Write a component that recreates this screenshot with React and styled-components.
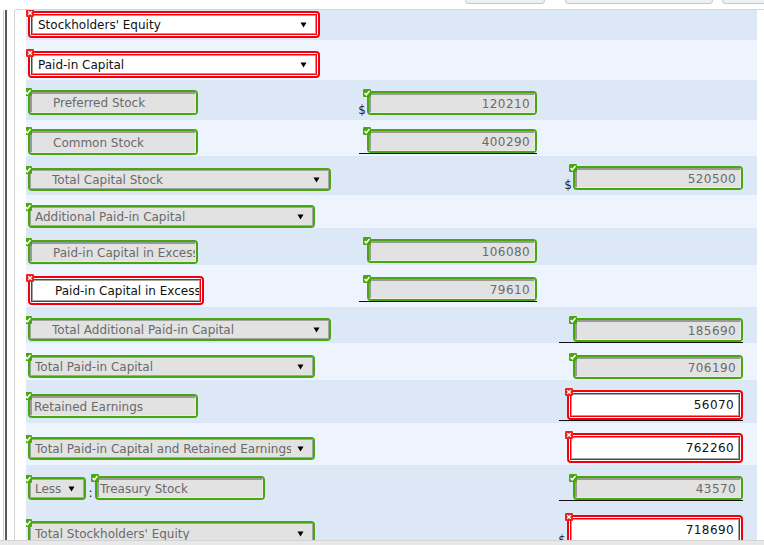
import styled, { createGlobalStyle } from "styled-components";

const GREEN = "#46a80c";
const RED = "#f2000c";

const Global = createGlobalStyle`
  html, body {
    margin: 0;
    padding: 0;
    background: #fff;
  }
  body {
    font-family: "DejaVu Sans", Verdana, sans-serif;
    font-size: 12px;
  }
`;

const Page = styled.div`
  width: 764px;
  height: 545px;
  overflow: hidden;
  display: flex;
  flex-direction: column;
`;

const TopBar = styled.div`
  height: 9px;
  margin-left: 15px;
  padding-left: 450px;
  border-bottom: 1px solid #cfd6de;
  display: flex;
  align-items: flex-start;
  gap: 20px;
  overflow: hidden;
`;

const TopButton = styled.span`
  flex: none;
  box-sizing: border-box;
  width: ${(p) => p.$w}px;
  height: 4px;
  margin-left: ${(p) => p.$ml || 0}px;
  background: #eef0f3;
  border: 1px solid #c4c9cf;
  border-top: none;
  border-radius: 0 0 5px 5px;
`;

const Body = styled.div`
  flex: 1;
  display: flex;
  min-height: 0;
`;

const Rail = styled.div`
  flex: none;
  width: 26px;
  background: linear-gradient(
    to right,
    transparent 3px,
    #d2d2d2 3px 4px,
    transparent 4px 5px,
    #5a5a5a 5px 7px,
    transparent 7px 14px,
    #d2d2d2 14px 15px,
    transparent 15px
  );
`;

const Sheet = styled.div`
  width: 731px;
  overflow: hidden;
`;

const Row = styled.div`
  display: grid;
  grid-template-columns: 333px 200px 198px;
  align-items: start;
  box-sizing: border-box;
  height: ${(p) => p.$h}px;
  overflow: hidden;
  background: ${(p) => (p.$dark ? "#dde8f7" : "#edf4fd")};
`;

const LabelCell = styled.div`
  display: flex;
  align-items: flex-end;
  padding-left: 2px;
  margin-top: ${(p) => p.$top || 0}px;
`;

const AmountCell = styled.div`
  grid-column: ${(p) => p.$col};
  display: flex;
  justify-content: flex-end;
  align-items: flex-end;
  box-sizing: border-box;
  width: ${(p) => (p.$col === 2 ? 178 : 184)}px;
  height: ${(p) => p.$h}px;
  margin-top: ${(p) => p.$top || 0}px;
  border-bottom: ${(p) => (p.$line ? "1px solid #111" : "none")};
`;

const Dollar = styled.span`
  color: #2a2418;
  line-height: 12px;
  padding-right: 1px;
  margin-bottom: -1px;
`;

const Colon = styled.span`
  color: #222;
  width: 9px;
  text-align: center;
  line-height: 12px;
  margin-bottom: 1px;
`;

const Frame = styled.span`
  position: relative;
  flex: none;
  display: inline-flex;
  box-sizing: border-box;
  width: ${(p) => p.$w}px;
  height: ${(p) => p.$h}px;
  border: 2px solid ${(p) => (p.$ok ? GREEN : RED)};
  border-radius: 4px;
  padding: ${(p) => (p.$ok ? "0" : "2px")};
  background: #fff;
`;

const Inner = styled.span`
  flex: 1;
  min-width: 0;
  display: flex;
  align-items: center;
  box-sizing: border-box;
  overflow: hidden;
  white-space: nowrap;
  padding: 0 ${(p) => (p.$num ? 4 : p.$select ? 8 : 0)}px 0 ${(p) => p.$indent}px;
  background: ${(p) => (p.$ok ? "#e2e2e2" : "#fff")};
  color: ${(p) => (p.$ok ? "#6a6a6a" : "#111")};
  border: 1px solid #a3a3a3;
  border-top: ${(p) => (p.$ok && !p.$select ? "2px solid #999" : "1px solid #a3a3a3")};
  border-left: ${(p) => (p.$ok && !p.$select ? "2px solid #999" : "1px solid #a3a3a3")};
  border-bottom-color: ${(p) => (p.$ok && !p.$select ? "#eaeaea" : "#a3a3a3")};
  border-right-color: ${(p) => (p.$ok && !p.$select ? "#eaeaea" : "#a3a3a3")};
  box-shadow: ${(p) => (p.$ok ? "none" : `0 0 0 1px ${RED}`)};
`;

const Text = styled.span`
  flex: 1;
  overflow: hidden;
  text-align: ${(p) => (p.$num ? "right" : "left")};
  letter-spacing: ${(p) => (p.$num ? "0.4px" : "0")};
`;

const Badge = styled.svg`
  position: absolute;
  left: ${(p) => (p.$ok ? -6 : -4)}px;
  top: -4px;
  width: 8px;
  height: 8px;
`;

const Arrow = styled.svg`
  flex: none;
  width: 7px;
  height: 6px;
  margin-left: 6px;
`;

function Mark({ ok }) {
  return (
    <Badge $ok={ok} viewBox="0 0 8 8">
      <rect width="8" height="8" rx="1.2" fill={ok ? GREEN : "#e8231a"} />
      {ok ? (
        <polyline points="1.6,4.1 3.3,5.8 6.5,2.1" fill="none" stroke="#fff" strokeWidth="1.5" />
      ) : (
        <path d="M2.2 2.2 L5.8 5.8 M5.8 2.2 L2.2 5.8" stroke="#fff" strokeWidth="1.3" />
      )}
    </Badge>
  );
}

function Field({ ok, w, h, indent = 4, select, num, children }) {
  return (
    <Frame $ok={ok} $w={w} $h={h}>
      <Mark ok={ok} />
      <Inner $ok={ok} $indent={indent} $select={select} $num={num}>
        <Text $num={num}>{children}</Text>
        {select && (
          <Arrow viewBox="0 0 7 6">
            <polygon points="0.5,0.5 6.5,0.5 3.5,5.5" fill="#000" />
          </Arrow>
        )}
      </Inner>
    </Frame>
  );
}

function Amount({ col, top, line, dollar, ok = true, children }) {
  const h = ok ? 24 : 30;
  return (
    <AmountCell $col={col} $top={top} $line={line} $h={h + (line ? 1 : 0)}>
      {dollar && <Dollar>$</Dollar>}
      <Field ok={ok} w={ok ? 170 : 176} h={h} num>
        {children}
      </Field>
    </AmountCell>
  );
}

const BottomBar = styled.div`
  flex: none;
  height: 4px;
  background: #e8e8e8;
  border-top: 1px solid #d3d3d3;
`;

export default function App() {
  return (
    <Page>
      <Global />
      <TopBar>
        <TopButton $w={80} />
        <TopButton $w={148} />
        <TopButton $w={60} $ml={-11} />
      </TopBar>
      <Body>
        <Rail />
        <Sheet>
          <Row $h={30} $dark>
            <LabelCell $top={1}>
              <Field w={292} h={27} indent={5} select>
                Stockholders' Equity
              </Field>
            </LabelCell>
          </Row>

          <Row $h={40}>
            <LabelCell $top={11}>
              <Field w={292} h={27} indent={5} select>
                Paid-in Capital
              </Field>
            </LabelCell>
          </Row>

          <Row $h={40} $dark>
            <LabelCell $top={10}>
              <Field ok w={170} h={25} indent={21}>
                Preferred Stock
              </Field>
            </LabelCell>
            <Amount col={2} top={11} dollar>
              120210
            </Amount>
          </Row>

          <Row $h={36}>
            <LabelCell $top={9}>
              <Field ok w={170} h={26} indent={21}>
                Common Stock
              </Field>
            </LabelCell>
            <Amount col={2} top={9} line>
              400290
            </Amount>
          </Row>

          <Row $h={39} $dark>
            <LabelCell $top={12}>
              <Field ok w={303} h={23} indent={21} select>
                Total Capital Stock
              </Field>
            </LabelCell>
            <Amount col={3} top={10} dollar>
              520500
            </Amount>
          </Row>

          <Row $h={33}>
            <LabelCell $top={10}>
              <Field ok w={287} h={23} indent={4} select>
                Additional Paid-in Capital
              </Field>
            </LabelCell>
          </Row>

          <Row $h={37} $dark>
            <LabelCell $top={12}>
              <Field ok w={170} h={24} indent={21}>
                Paid-in Capital in Excess
              </Field>
            </LabelCell>
            <Amount col={2} top={11}>
              106080
            </Amount>
          </Row>

          <Row $h={42}>
            <LabelCell $top={11}>
              <Field w={176} h={29} indent={22}>
                Paid-in Capital in Excess
              </Field>
            </LabelCell>
            <Amount col={2} top={12} line>
              79610
            </Amount>
          </Row>

          <Row $h={36} $dark>
            <LabelCell $top={11}>
              <Field ok w={303} h={23} indent={21} select>
                Total Additional Paid-in Capital
              </Field>
            </LabelCell>
            <Amount col={3} top={11} line>
              185690
            </Amount>
          </Row>

          <Row $h={37}>
            <LabelCell $top={12}>
              <Field ok w={287} h={23} indent={4} select>
                Total Paid-in Capital
              </Field>
            </LabelCell>
            <Amount col={3} top={12}>
              706190
            </Amount>
          </Row>

          <Row $h={43} $dark>
            <LabelCell $top={14}>
              <Field ok w={170} h={24} indent={2}>
                Retained Earnings
              </Field>
            </LabelCell>
            <Amount col={3} top={10} line ok={false}>
              56070
            </Amount>
          </Row>

          <Row $h={42}>
            <LabelCell $top={14}>
              <Field ok w={287} h={23} indent={4} select>
                Total Paid-in Capital and Retained Earnings
              </Field>
            </LabelCell>
            <Amount col={3} top={10} ok={false}>
              762260
            </Amount>
          </Row>

          <Row $h={45} $dark>
            <LabelCell $top={11}>
              <Field ok w={58} h={23} indent={4} select>
                Less
              </Field>
              <Colon>:</Colon>
              <Field ok w={170} h={24} indent={1}>
                Treasury Stock
              </Field>
            </LabelCell>
            <Amount col={3} top={11} line>
              43570
            </Amount>
          </Row>

          <Row $h={30} $dark>
            <LabelCell $top={11}>
              <Field ok w={287} h={25} indent={4} select>
                Total Stockholders' Equity
              </Field>
            </LabelCell>
            <Amount col={3} top={5} dollar ok={false}>
              718690
            </Amount>
          </Row>
        </Sheet>
      </Body>
      <BottomBar />
    </Page>
  );
}
